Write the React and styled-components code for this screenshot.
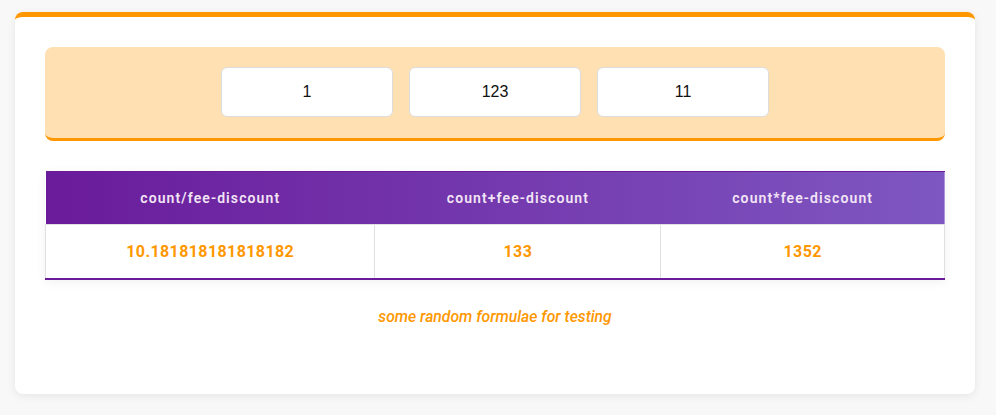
import styled, { createGlobalStyle } from "styled-components";

const GlobalStyle = createGlobalStyle`
  body {
    margin: 0;
    background: #f8f8f8;
    font-family: Roboto, "Liberation Sans", sans-serif;
  }
`;

const Page = styled.div`
  padding: 12px 21px 20px 15px;
`;

const Card = styled.div`
  background: #fff;
  border-top: 5px solid #ff9800;
  border-radius: 8px;
  box-shadow: 0 2px 8px rgba(0, 0, 0, 0.08);
  padding: 30px 30px 0;
  height: 382px;
  box-sizing: border-box;
`;

const InputPanel = styled.div`
  background: #ffe0b2;
  border-bottom: 3px solid #ff9800;
  border-radius: 8px;
  padding: 20px 20px 21px;
  display: flex;
  justify-content: center;
  gap: 16px;
`;

const Field = styled.input`
  width: 172px;
  height: 50px;
  box-sizing: border-box;
  border: 1px solid #dcdcdc;
  border-radius: 6px;
  background: #fff;
  text-align: center;
  font-family: "Liberation Sans", Arial, sans-serif;
  font-size: 16px;
  color: #111;
  outline: none;
  padding: 0;
`;

const Table = styled.table`
  width: 100%;
  margin-top: 30px;
  border-collapse: collapse;
  border-top: 1px solid #6a1b9a;
  border-bottom: 2px solid #6a1b9a;
  box-shadow: 0 2px 10px rgba(0, 0, 0, 0.06);
`;

const HeadRow = styled.tr`
  background: linear-gradient(90deg, #6a1b9a, #7e57c2);
`;

const Th = styled.th`
  height: 52px;
  padding: 0 16px;
  color: #f3e5f5;
  font-size: 14px;
  font-weight: 600;
  letter-spacing: 1.1px;
`;

const Td = styled.td`
  height: 53px;
  padding: 0 16px;
  border: 1px solid #e0e0e0;
  border-bottom: none;
  text-align: center;
  color: #ff9800;
  font-size: 16px;
  font-weight: 700;
  letter-spacing: 0.4px;
`;

const Caption = styled.p`
  margin: 27px 0 0;
  text-align: center;
  font-style: italic;
  font-size: 15.7px;
  font-weight: 500;
  color: #ff9800;
`;

const values = ["1", "123", "11"];

const results = [
  { label: "count/fee-discount", value: "10.181818181818182" },
  { label: "count+fee-discount", value: "133" },
  { label: "count*fee-discount", value: "1352" },
];

export default function App() {
  return (
    <Page>
      <GlobalStyle />
      <Card>
        <InputPanel>
          {values.map((v, i) => (
            <Field key={i} defaultValue={v} />
          ))}
        </InputPanel>

        <Table>
          <thead>
            <HeadRow>
              {results.map((r) => (
                <Th key={r.label}>{r.label}</Th>
              ))}
            </HeadRow>
          </thead>
          <tbody>
            <tr>
              {results.map((r) => (
                <Td key={r.label}>{r.value}</Td>
              ))}
            </tr>
          </tbody>
        </Table>

        <Caption>some random formulae for testing</Caption>
      </Card>
    </Page>
  );
}
